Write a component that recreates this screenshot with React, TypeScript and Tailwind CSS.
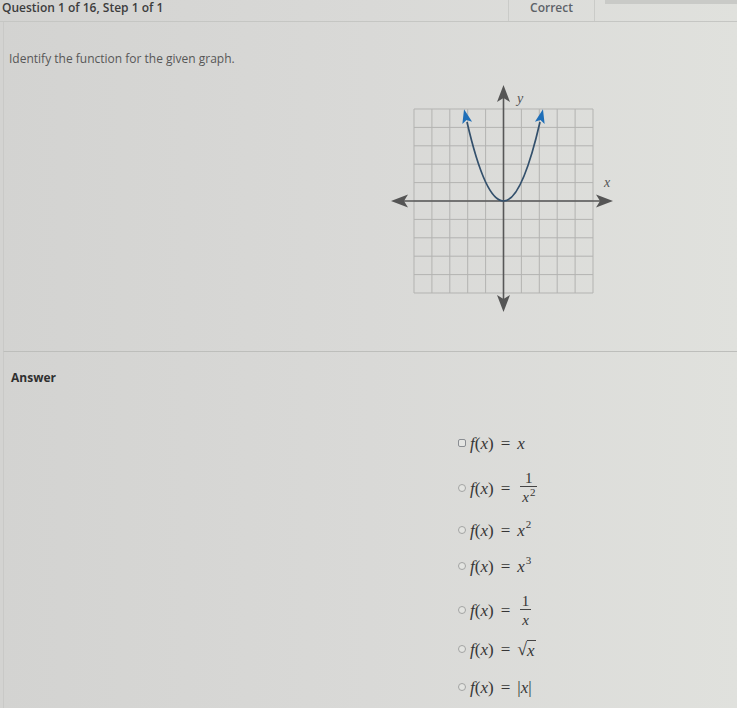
import React from 'react';

const UI = { fontFamily: '"Open Sans", "Liberation Sans", sans-serif' };
const MATH = { fontFamily: '"Liberation Serif", "DejaVu Serif", serif' };

const GRID_X = Array.from({ length: 11 }, (_, i) => 28 + i * 17.9);
const GRID_Y = Array.from({ length: 11 }, (_, i) => 28 + i * 18.4);

function Graph() {
  return (
    <svg width="240" height="240" viewBox="0 0 240 240" className="block">
      {GRID_X.map((x) => (
        <line key={'v' + x} x1={x} y1={28} x2={x} y2={212} stroke="#b3b3b1" strokeWidth="1" />
      ))}
      {GRID_Y.map((y) => (
        <line key={'h' + y} x1={28} y1={y} x2={207} y2={y} stroke="#b3b3b1" strokeWidth="1" />
      ))}
      {/* axes */}
      <line x1={12} y1={120} x2={220} y2={120} stroke="#575757" strokeWidth="1.6" />
      <line x1={117.5} y1={12} x2={117.5} y2={223} stroke="#575757" strokeWidth="1.6" />
      <polygon points="227,120 210,113.5 214,120 210,126.5" fill="#555" />
      <polygon points="5,120 22,113.5 18,120 22,126.5" fill="#555" />
      <polygon points="117.5,4 111,21 117.5,17 124,21" fill="#555" />
      <polygon points="117.5,231 111,214 117.5,218 124,214" fill="#555" />
      {/* parabola */}
      <path d="M81,41 Q117.5,199 154,41" fill="none" stroke="#33506c" strokeWidth="1.7" />
      <g transform="translate(81,41) rotate(-13.2)">
        <polygon points="0,-13 -5,1 0,-2 5,1" fill="#1f6fb8" />
      </g>
      <g transform="translate(154,41) rotate(13.2)">
        <polygon points="0,-13 -5,1 0,-2 5,1" fill="#1f6fb8" />
      </g>
      <text x={131} y={22} fontSize="14" fontStyle="italic" fill="#555" style={MATH}>
        y
      </text>
      <text x={218} y={106} fontSize="14" fontStyle="italic" fill="#555" style={MATH}>
        x
      </text>
    </svg>
  );
}

function Fx() {
  return (
    <>
      <span className="italic">f</span>
      <span>(</span>
      <span className="italic">x</span>
      <span>)</span>
      <span className="mx-[7px]">=</span>
    </>
  );
}

function Sup({ children }: { children: React.ReactNode }) {
  return <span className="text-[11px] relative -top-[6px] ml-[1px]">{children}</span>;
}

function Frac({ den }: { den: React.ReactNode }) {
  return (
    <span className="inline-flex flex-col items-center text-[15px] leading-[16px] ml-[3px]">
      <span className="px-[1px]">1</span>
      <span className="border-t border-[#444] px-[2px] pt-[2px]">{den}</span>
    </span>
  );
}

function Radio({ square }: { square?: boolean }) {
  return (
    <span
      className={
        square
          ? 'w-[8px] h-[8px] rounded-[2px] border border-[#8a8d92] bg-[#e4e5e3] mr-[4px] shrink-0'
          : 'w-[8px] h-[8px] rounded-full border border-[#a3a4a3] bg-[#e3e4e1] mr-[4px] shrink-0'
      }
    />
  );
}

function Option({ children, tall, square, mt }: { children: React.ReactNode; tall?: boolean; square?: boolean; mt: string }) {
  return (
    <div className={`flex items-center ${tall ? 'h-[40px]' : 'h-[20px]'} ${mt}`}>
      <Radio square={square} />
      <span className="flex items-center text-[17px] leading-none text-[#363636]" style={MATH}>
        {children}
      </span>
    </div>
  );
}

export default function App() {
  return (
    <div
      className="w-[737px] h-[708px] overflow-hidden bg-gradient-to-r from-[#d3d3d1] via-[#d9d9d7] to-[#e0e1dd]"
      style={UI}
    >
      {/* header */}
      <div className="h-[22px] flex border-b border-[#c5c6c3] overflow-hidden">
        <div className="w-[508px] pl-[2px] pt-[1px] text-[12px] leading-[14px] font-semibold text-[#3d3d3d]">
          Question 1 of 16, Step 1 of 1
        </div>
        <div className="w-[87px] border-l border-[#cacbc8] border-r flex justify-center pt-[1px] text-[12px] leading-[14px] font-semibold text-[#5d6268]">
          Correct
        </div>
        <div className="flex-1 pl-[10px]">
          <div className="h-[4px] bg-[#c9cac7]" />
        </div>
      </div>

      {/* question */}
      <div className="h-[330px] ml-[3px] border-l border-[#c9c9c7] border-b border-b-[#bdbebb]">
        <div className="pt-[29px] pl-[5px] text-[12px] leading-[16px] text-[#575757]">
          Identify the function for the given graph.
        </div>
        <div className="ml-[382px] mt-[14px]">
          <Graph />
        </div>
      </div>

      {/* answer */}
      <div className="ml-[3px] border-l border-[#c9c9c7] h-[356px]">
        <div className="pt-[18px] pl-[7px] text-[12px] leading-[16px] font-bold text-[#2f2f2f]">Answer</div>
        <div className="ml-[454px] mt-[47px] flex flex-col">
          <Option square mt="mt-0">
            <Fx />
            <span className="italic">x</span>
          </Option>
          <Option tall mt="mt-[15px]">
            <Fx />
            <Frac
              den={
                <span>
                  <span className="italic">x</span>
                  <Sup>2</Sup>
                </span>
              }
            />
          </Option>
          <Option mt="mt-[12px]">
            <Fx />
            <span className="italic">x</span>
            <Sup>2</Sup>
          </Option>
          <Option mt="mt-[16px]">
            <Fx />
            <span className="italic">x</span>
            <Sup>3</Sup>
          </Option>
          <Option tall mt="mt-[14px]">
            <Fx />
            <Frac den={<span className="italic">x</span>} />
          </Option>
          <Option mt="mt-[9px]">
            <Fx />
            <span className="text-[18px]">√</span>
            <span className="italic border-t border-[#444] pt-[1px] pr-[1px]">x</span>
          </Option>
          <Option mt="mt-[18px]">
            <Fx />
            <span>|</span>
            <span className="italic">x</span>
            <span>|</span>
          </Option>
        </div>
      </div>
    </div>
  );
}
